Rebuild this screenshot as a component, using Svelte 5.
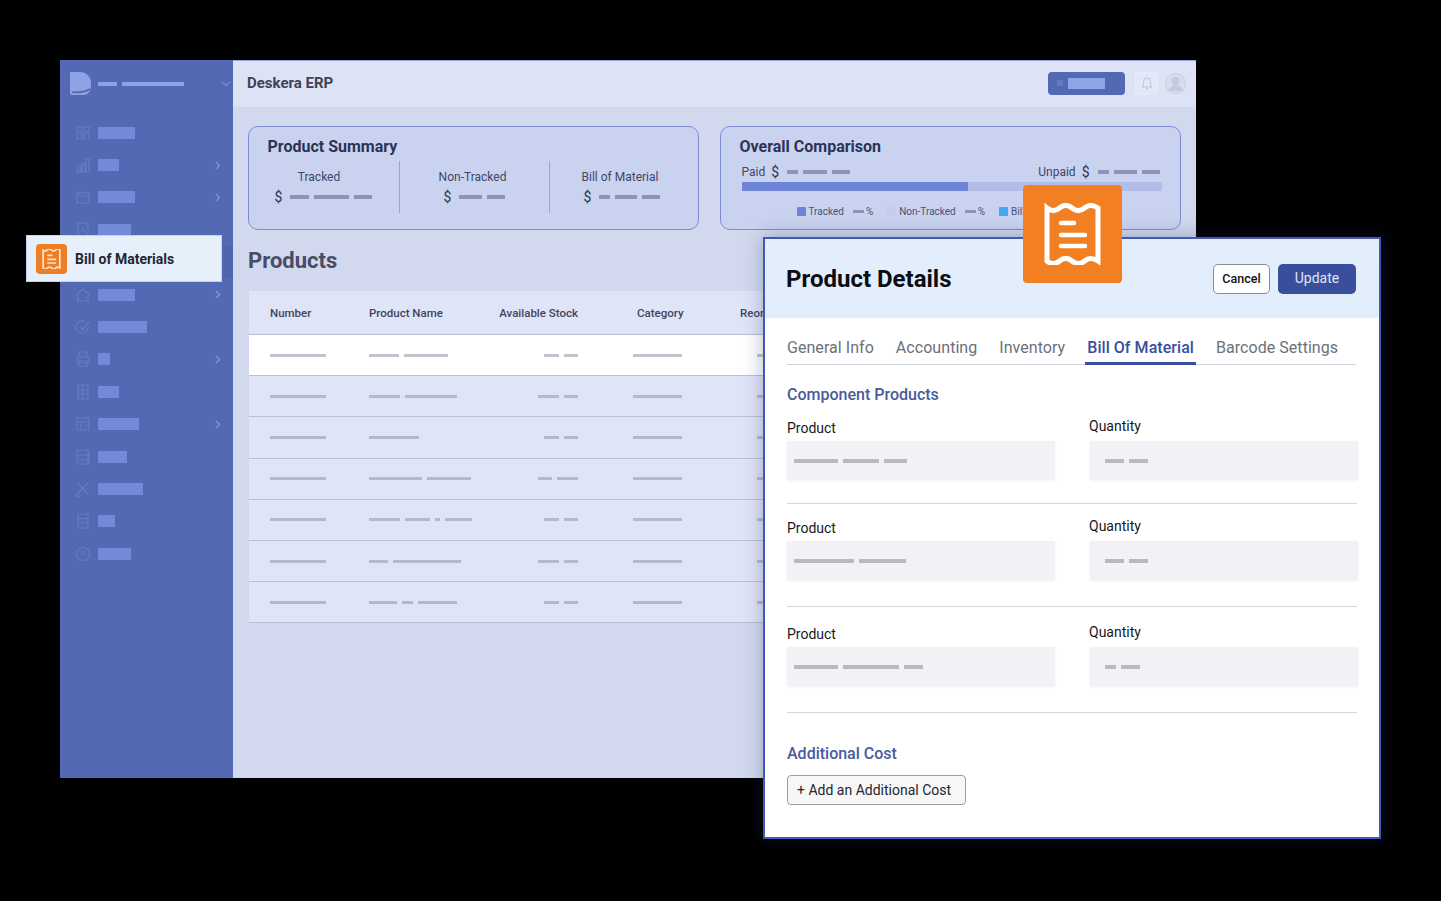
<script>
	const navItems = [
		{ w: 37, icon: 'grid' },
		{ w: 21, icon: 'chart', more: true },
		{ w: 37, icon: 'calendar', more: true },
		{ w: 33, icon: 'doc' },
		{ w: 37, icon: 'doc', current: true },
		{ w: 37, icon: 'home', more: true },
		{ w: 49, icon: 'check' },
		{ w: 12, icon: 'print', more: true },
		{ w: 21, icon: 'table' },
		{ w: 41, icon: 'form', more: true },
		{ w: 29, icon: 'list' },
		{ w: 45, icon: 'cut' },
		{ w: 17, icon: 'stack' },
		{ w: 33, icon: 'clock' }
	];

	const iconPaths = {
		grid: 'M2 2h5v5H2zM9 2h5v5H9zM2 9h5v5H2zM9 9h5v5H9z',
		chart: 'M1 15h14M3 15V9h3v6M7 15V6h3v9M11 15V2h3v13',
		calendar: 'M2 4h12v10H2zM2 7h12M5 2v3M11 2v3',
		doc: 'M3 1h10v14H3zM6 10a2 2 0 1 1 4 0M8 5v2',
		home: 'M1 8l7-6 7 6M3 8v6h10V8',
		check: 'M13 8a6 6 0 1 1-3-5.2M5 8l2.500 2.500L14 3',
		print: 'M4 6V1h8v5M2 6h12v6H2zM4 10h8v5H4z',
		table: 'M3 1h10v14H3zM3 6h10M3 10h10M8 1v14',
		form: 'M2 2h12v12H2zM2 6h12M6 6v8M9 10h5',
		list: 'M2 1h11v14H2zM2 6h11M2 11h11M14 3v11',
		cut: 'M2 2l11 11M13 2L2 13M5 14a2 2 0 1 1-3-2',
		stack: 'M3 1h10v14H3zM3 5.500h10M3 10h10',
		clock: 'M8 1.500a6.500 6.500 0 1 0 0 13 6.500 6.500 0 0 0 0-13zM8 5v3l2 1'
	};

	const summary = [
		{ label: 'Tracked', bars: [19, 35, 18] },
		{ label: 'Non-Tracked', bars: [23, 18] },
		{ label: 'Bill of Material', bars: [11, 22, 18] }
	];

	const tableRows = [
		{ name: [30, 44], stock: [15, 14] },
		{ name: [31, 52], stock: [21, 14] },
		{ name: [50], stock: [15, 14] },
		{ name: [53, 44], stock: [14, 21] },
		{ name: [31, 25, 5, 27], stock: [15, 14] },
		{ name: [19, 68], stock: [21, 14] },
		{ name: [28, 11, 39], stock: [15, 14] }
	];

	const tabs = ['General Info', 'Accounting', 'Inventory', 'Bill Of Material', 'Barcode Settings'];

	const components = [
		{ product: [44, 36, 23], qty: [19, 19] },
		{ product: [60, 47], qty: [19, 19] },
		{ product: [44, 56, 19], qty: [11, 19] }
	];
</script>

{#snippet bars(list)}
	<span class="bars">
		{#each list as w}
			<i style="width: {w}px"></i>
		{/each}
	</span>
{/snippet}

<div class="canvas">
	<div class="window">
		<aside class="sidebar">
			<div class="brand">
				<svg width="23" height="25" viewBox="0 0 23 25">
					<path d="M1 1h10a11 11 0 0 1 11 11v4a8 8 0 0 1-8 8H3a2 2 0 0 1-2-2z" fill="#8fa2e6" />
					<path d="M3 21c7 1 13 0 18-3" stroke="#4d60a8" stroke-width="1.500" fill="none" />
				</svg>
				<span class="brand-bars">
					<i class="b1"></i>
					<i class="b2"></i>
				</span>
				<svg class="brand-chevron" width="10" height="6" viewBox="0 0 10 6">
					<path d="M1 1l4 3.500L9 1" stroke="#7488d4" stroke-width="1.500" fill="none" />
				</svg>
			</div>
			<nav>
				{#each navItems as item}
					<div class="nav-item" class:current={item.current}>
						<svg width="16" height="16" viewBox="0 0 16 16">
							<path d={iconPaths[item.icon]} stroke="#677bc6" stroke-width="1.200" fill="none" />
						</svg>
						<span class="nav-label" style="width: {item.w}px"></span>
						{#if item.more}
							<svg class="nav-chevron" width="6" height="9" viewBox="0 0 6 9">
								<path d="M1 1l3.500 3.500L1 8" stroke="#7e92dc" stroke-width="1.500" fill="none" />
							</svg>
						{/if}
					</div>
				{/each}
			</nav>
		</aside>

		<div class="main">
			<header class="topbar">
				<span class="app-name">Deskera ERP</span>
				<div class="top-actions">
					<div class="top-button">
						<span class="dot"></span>
						<span class="label"></span>
					</div>
					<div class="bell">
						<svg width="12" height="13" viewBox="0 0 12 13">
							<path d="M6 1a3.500 3.500 0 0 0-3.500 3.500V8L1 10h10L9.500 8V4.500A3.500 3.500 0 0 0 6 1zM5 11.500h2" stroke="#bcc4dd" fill="none" />
						</svg>
					</div>
					<div class="avatar">
						<svg width="21" height="21" viewBox="0 0 21 21">
							<circle cx="10.500" cy="8" r="4" fill="#c4c9dc" />
							<path d="M3.500 18a7 6 0 0 1 14 0z" fill="#c4c9dc" />
						</svg>
					</div>
				</div>
			</header>

			<div class="content">
				<div class="cards">
					<section class="card summary">
						<h2>Product Summary</h2>
						<div class="stats">
							{#each summary as stat}
								<div class="stat">
									<div class="stat-label">{stat.label}</div>
									<div class="stat-value">
										<span class="dollar">$</span>
										{@render bars(stat.bars)}
									</div>
								</div>
							{/each}
						</div>
					</section>

					<section class="card overall">
						<h2>Overall Comparison</h2>
						<div class="paid-row">
							<div class="paid">
								<span>Paid</span>
								<span class="dollar">$</span>
								{@render bars([11, 24, 18])}
							</div>
							<div class="paid">
								<span>Unpaid</span>
								<span class="dollar">$</span>
								{@render bars([11, 23, 18])}
							</div>
						</div>
						<div class="progress"><div class="progress-fill"></div></div>
						<div class="legend">
							<span class="swatch tracked"></span>
							<span>Tracked</span>
							<i class="legend-bar"></i>
							<span class="pct">%</span>
							<span class="swatch non"></span>
							<span>Non-Tracked</span>
							<i class="legend-bar"></i>
							<span class="pct">%</span>
							<span class="swatch bill"></span>
							<span>Bill of Material</span>
						</div>
					</section>
				</div>

				<h1>Products</h1>

				<div class="table">
					<div class="tr thead">
						<span>Number</span>
						<span>Product Name</span>
						<span class="stock">Available Stock</span>
						<span class="cat">Category</span>
						<span>Reorder</span>
					</div>
					{#each tableRows as row}
						<div class="tr">
							<span>{@render bars([56])}</span>
							<span>{@render bars(row.name)}</span>
							<span class="stock">{@render bars(row.stock)}</span>
							<span class="cat-bar">{@render bars([49])}</span>
							<span class="last">{@render bars([30])}</span>
						</div>
					{/each}
				</div>
			</div>
		</div>
	</div>

	<div class="bom-chip">
		<span class="chip-icon">
			<svg width="19" height="20" viewBox="0 0 55 60">
				<path d="M2.500 3c4.500 4 8.500 4 12.500 0s8.500-4 12.500 0 8.500 4 12.500 0 8.500-4 12.500 0v54c-4.500-4-8.500-4-12.500 0s-8.500 4-12.500 0-8.500-4-12.500 0-8.500 4-12.500 0z" fill="none" stroke="#fbe3cd" stroke-width="5" />
				<path d="M15 19h15M15 31h26M15 42h26" stroke="#fbe3cd" stroke-width="5" />
			</svg>
		</span>
		<span>Bill of Materials</span>
	</div>

	<div class="modal">
		<header class="modal-head">
			<h2>Product Details</h2>
			<div class="modal-actions">
				<button class="cancel">Cancel</button>
				<button class="update">Update</button>
			</div>
		</header>

		<div class="modal-body">
			<div class="tabs">
				{#each tabs as tab, i}
					<span class="tab" class:active={i === 3}>{tab}</span>
				{/each}
			</div>

			<h3 class="section-title">Component Products</h3>

			{#each components as row}
				<div class="field-row">
					<div class="field">
						<label>Product</label>
						<div class="input">{@render bars(row.product)}</div>
					</div>
					<div class="field qty">
						<label>Quantity</label>
						<div class="input">{@render bars(row.qty)}</div>
					</div>
				</div>
			{/each}

			<h3 class="section-title cost">Additional Cost</h3>
			<button class="add-cost">+ Add an Additional Cost</button>
		</div>
	</div>

	<div class="receipt">
		<svg width="57" height="62" viewBox="0 0 57 62">
			<path d="M3 5c4.200 3.500 8.300 3.500 12.500 0s8.300-3.500 12.500 0 8.300 3.500 12.500 0 8.300-3.500 13.500 0v53c-5.200-3.500-9.300-3.500-13.500 0s-8.300 3.500-12.500 0-8.300-3.500-12.500 0-8.300 3.500-12.500 0z" fill="none" stroke="#fff" stroke-width="5" />
			<path d="M17 20h13M17 32h24M17 43h24" stroke="#fff" stroke-width="4.500" stroke-linecap="round" />
		</svg>
	</div>
</div>

<style>
	:global(body) {
		margin: 0;
		background: #000;
	}

	.canvas {
		position: relative;
		width: 1441px;
		height: 901px;
		background: #000;
		overflow: hidden;
		font-family: Roboto, 'Liberation Sans', sans-serif;
	}

	.bars {
		display: inline-flex;
		gap: 5px;
	}

	.bars i {
		display: block;
		height: 3px;
		background: #b4b9d2;
	}

	/* main window */
	.window {
		position: absolute;
		left: 60px;
		top: 60px;
		width: 1136px;
		height: 718px;
		display: flex;
		overflow: hidden;
	}

	.sidebar {
		width: 173px;
		flex: none;
		background: #5469b4;
	}

	.brand {
		height: 47px;
		display: flex;
		align-items: center;
		padding-left: 9px;
		gap: 6px;
		box-sizing: border-box;
	}

	.brand-bars {
		display: flex;
		gap: 5px;
	}

	.brand-bars i {
		display: block;
		height: 4px;
		background: #8fa2e6;
	}

	.b1 {
		width: 19px;
	}

	.b2 {
		width: 62px;
	}

	.brand-chevron {
		margin-left: 31px;
	}

	nav {
		padding-top: 9.500px;
	}

	.nav-item {
		height: 32.400px;
		display: flex;
		align-items: center;
		padding-left: 15px;
		gap: 7px;
	}

	.nav-item.current {
		background: linear-gradient(to right, transparent 95%, #4f63ae 95%);
	}

	.nav-label {
		height: 12px;
		background: #7489d8;
	}

	.nav-chevron {
		margin-left: auto;
		margin-right: 12px;
	}

	.main {
		flex: 1;
		min-width: 0;
		background: #d2d9ee;
		display: flex;
		flex-direction: column;
	}

	.topbar {
		height: 47px;
		flex: none;
		display: flex;
		align-items: center;
		justify-content: space-between;
		padding: 0 10px 2px 14px;
		background: #dde2f5;
		border-top: 1px solid #98a4dc;
		box-sizing: border-box;
	}

	.app-name {
		font-size: 15px;
		font-weight: 700;
		color: #3d4358;
	}

	.top-actions {
		display: flex;
		align-items: center;
		gap: 7px;
	}

	.top-button {
		width: 77px;
		height: 23px;
		background: #5469b4;
		border-radius: 4px;
		display: flex;
		align-items: center;
		gap: 5px;
		padding-left: 9px;
		box-sizing: border-box;
		margin-right: 3px;
	}

	.dot {
		width: 6px;
		height: 6px;
		background: #6479c2;
	}

	.label {
		width: 37px;
		height: 11px;
		background: #8fa3e8;
	}

	.bell {
		width: 23px;
		height: 23px;
		box-sizing: border-box;
		background: #e3e7f7;
		border: 1px solid #e9ecfa;
		border-radius: 4px;
		display: flex;
		align-items: center;
		justify-content: center;
	}

	.avatar {
		width: 21px;
		height: 21px;
		border-radius: 50%;
		background: #d8dcec;
		border: 1px solid #cbd0e2;
		box-sizing: border-box;
		overflow: hidden;
	}

	.avatar svg {
		display: block;
		margin: -1px;
	}

	.content {
		padding: 19px 15px 0;
	}

	.cards {
		display: flex;
		gap: 21px;
	}

	.card {
		height: 104px;
		box-sizing: border-box;
		background: #c9d3ef;
		border: 1.500px solid #7d8dd3;
		border-radius: 10px;
		color: #2e3450;
	}

	.card h2 {
		margin: 0;
		font-size: 16px;
		line-height: 20px;
		font-weight: 700;
		color: #2d3354;
	}

	.summary {
		width: 451px;
		padding-top: 10px;
	}

	.summary h2 {
		padding-left: 18.500px;
	}

	.stats {
		display: grid;
		grid-template-columns: 150px 150px 1fr;
		margin-top: 4px;
	}

	.stat {
		height: 52px;
		text-align: center;
		padding-top: 8px;
		box-sizing: border-box;
	}

	.stat + .stat {
		border-left: 1.500px solid #9aa6d2;
	}

	.stat:nth-child(1) .stat-label {
		padding-right: 10px;
	}

	.stat:nth-child(2) .stat-label {
		padding-right: 4px;
	}

	.stat:nth-child(3) .stat-label {
		padding-right: 8px;
	}

	.stat-label {
		font-size: 12px;
		line-height: 16px;
		color: #3f4668;
	}

	.stat-value {
		display: flex;
		justify-content: center;
		align-items: center;
		gap: 8px;
		height: 18px;
		margin-top: 3px;
	}

	.stat:nth-child(1) .stat-value {
		padding-right: 1px;
	}

	.stat:nth-child(3) .stat-value {
		padding-right: 4px;
	}

	.stat-value .bars i,
	.paid .bars i {
		height: 4px;
		background: #8c93b9;
	}

	.dollar {
		font-size: 14px;
		color: #2e3450;
	}

	.overall {
		width: 461px;
		padding: 10px 20.500px 0 18.500px;
	}

	.paid-row {
		display: flex;
		justify-content: space-between;
		margin: 7px 0 0 2px;
		height: 15px;
	}

	.paid {
		display: flex;
		align-items: center;
		gap: 6px;
		font-size: 12px;
		color: #3f4668;
	}

	.paid .bars {
		margin-left: 2px;
	}

	.progress {
		height: 9px;
		margin: 3px -2px 0 2px;
		background: #b1bde6;
	}

	.progress-fill {
		width: 226px;
		height: 100%;
		background: #6e84d6;
	}

	.legend {
		display: flex;
		align-items: center;
		height: 13px;
		margin-top: 14px;
		padding-left: 57px;
		font-size: 10px;
		color: #4a5175;
		white-space: nowrap;
	}

	.swatch {
		width: 9px;
		height: 9px;
		margin-right: 3px;
		border-radius: 1px;
	}

	.tracked {
		background: #6e84d6;
	}

	.non {
		margin-left: 14px;
		background: #c3cdec;
	}

	.bill {
		margin-left: 14px;
		background: #3fa9f0;
	}

	.legend-bar {
		display: block;
		width: 11px;
		height: 3px;
		margin-left: 9px;
		background: #8c93b9;
	}

	.pct {
		margin-left: 2px;
	}

	h1 {
		margin: 17px 0 0;
		font-size: 22px;
		line-height: 28px;
		font-weight: 700;
		color: #474c67;
	}

	.table {
		margin: 16px 0 0 1px;
	}

	.tr {
		display: grid;
		grid-template-columns: 99px 131px 78px 162px 1fr;
		align-items: center;
		height: 41.200px;
		box-sizing: border-box;
		padding-left: 21px;
		background: #e0e4f7;
		border-bottom: 1px solid #b9bfd8;
	}

	.tr > span {
		display: flex;
		align-items: center;
		white-space: nowrap;
	}

	.tr:nth-child(2) {
		background: #fff;
	}

	.tr:nth-child(2) .bars i {
		background: #c2c3cc;
	}

	.thead {
		height: 44px;
		font-size: 11.500px;
		font-weight: 500;
		color: #3f4560;
	}

	.tr > .stock {
		justify-content: flex-end;
	}

	.cat-bar {
		padding-left: 55px;
	}

	.cat {
		padding-left: 59px;
	}

	.last {
		padding-left: 17px;
	}

	/* floating chip */
	.bom-chip {
		position: absolute;
		left: 26px;
		top: 235px;
		width: 196px;
		height: 47px;
		box-sizing: border-box;
		display: flex;
		align-items: center;
		gap: 8px;
		padding-left: 9px;
		background: #e6f0fb;
		border: 1px solid #c5d2ea;
		font-size: 14px;
		font-weight: 700;
		color: #1f2537;
	}

	.chip-icon {
		width: 31px;
		height: 30px;
		display: flex;
		align-items: center;
		justify-content: center;
		background: #ee7f26;
		border-radius: 4px;
	}

	/* modal */
	.modal {
		position: absolute;
		left: 763px;
		top: 237px;
		width: 618px;
		height: 602px;
		box-sizing: border-box;
		background: #fff;
		border: 2px solid #4258b4;
		box-shadow: 0 0 18px rgba(40, 50, 100, 0.35);
	}

	.modal-head {
		height: 79px;
		display: flex;
		align-items: center;
		justify-content: space-between;
		padding: 0 23px 0 21px;
		background: #e3eefc;
	}

	.modal-head h2 {
		margin: 0;
		font-size: 24px;
		font-weight: 700;
		color: #0a0d14;
	}

	.modal-actions {
		display: flex;
		gap: 8px;
	}

	button {
		font-family: inherit;
		cursor: pointer;
	}

	.cancel {
		width: 57px;
		height: 30px;
		padding: 0;
		background: #fff;
		border: 1px solid #8a8d96;
		border-radius: 5px;
		font-size: 12.500px;
		font-weight: 500;
		color: #111;
	}

	.update {
		width: 78px;
		height: 30px;
		padding: 0 0 2px;
		background: #3a4f9b;
		border: none;
		border-radius: 5px;
		font-size: 14px;
		color: #dfe6fb;
	}

	.modal-body {
		padding: 0 22px 0 22px;
	}

	.tabs {
		display: flex;
		gap: 22px;
		height: 47px;
		align-items: flex-end;
		margin-right: 1px;
		border-bottom: 1px solid #cfd2da;
		box-sizing: border-box;
	}

	.tab {
		font-size: 16px;
		line-height: 20px;
		padding: 0 0 6px;
		color: #6c7079;
		letter-spacing: 0.050px;
		white-space: nowrap;
	}

	.tab.active {
		font-weight: 500;
		color: #3a4f9b;
		margin: 0 -2px -1px;
		padding: 0 2px 4px;
		border-bottom: 3px solid #3a4f9b;
	}

	.section-title {
		margin: 20px 0 0;
		font-size: 16px;
		line-height: 20px;
		font-weight: 500;
		color: #4a5a9c;
	}

	.field-row {
		display: grid;
		grid-template-columns: 268px 268px;
		column-gap: 35px;
		padding: 13px 0 23px 0;
		border-bottom: 1px solid #d4d6dc;
		align-items: end;
	}

	.field-row:nth-of-type(3) {
		padding-top: 14px;
		padding-bottom: 26px;
	}

	.field-row:nth-of-type(4) {
		padding-top: 17px;
		padding-bottom: 26px;
	}

	label {
		display: block;
		font-size: 14px;
		line-height: 16px;
		margin-bottom: 5px;
		color: #15181f;
	}

	.qty label {
		margin-bottom: 7px;
		margin-left: -1px;
	}

	.input {
		height: 39px;
		display: flex;
		align-items: center;
		padding-left: 7px;
		background: #f3f1f5;
		box-shadow: 0 1px 3px rgba(0, 0, 0, 0.06);
	}

	.input .bars i {
		height: 4px;
		background: #b9b9c0;
	}

	.qty .input {
		padding-left: 15px;
	}

	.section-title.cost {
		margin-top: 31px;
	}

	.add-cost {
		display: block;
		margin-top: 11px;
		width: 179px;
		height: 30px;
		padding: 0 0 0 9px;
		text-align: left;
		background: #f7f7f8;
		border: 1px solid #9a9da5;
		border-radius: 4px;
		font-size: 14px;
		color: #23262e;
	}

	.receipt {
		position: absolute;
		left: 1023px;
		top: 185px;
		width: 99px;
		height: 98px;
		display: flex;
		align-items: center;
		justify-content: center;
		background: #f27f22;
		border-radius: 4px;
	}
</style>
